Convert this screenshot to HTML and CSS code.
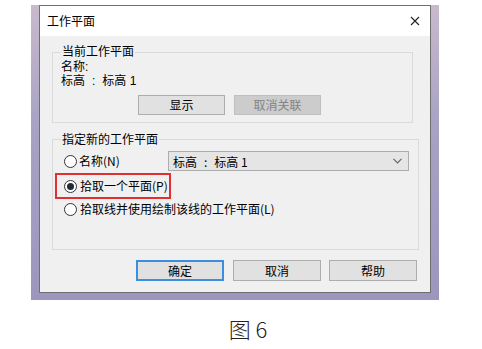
FILE: index.html
```html
<!DOCTYPE html>
<html lang="zh-CN">
<head>
<meta charset="utf-8">
<title>工作平面</title>
<link rel="stylesheet" href="styles.css">
</head>
<body>
<div class="page">
  <div class="frame">
    <div class="dialog">
      <div class="titlebar">
        <span class="title">工作平面</span>
        <svg class="close" width="10" height="10" viewBox="0 0 10 10"><path d="M1 1L9 9M9 1L1 9" stroke="#222" stroke-width="1.1" fill="none"/></svg>
      </div>
      <fieldset class="group group1">
        <legend>当前工作平面</legend>
        <div class="line">名称:</div>
        <div class="line">标高<span class="colon">:</span>标高 1</div>
        <div class="btnrow">
          <button class="btn">显示</button>
          <button class="btn disabled">取消关联</button>
        </div>
      </fieldset>
      <fieldset class="group group2">
        <legend>指定新的工作平面</legend>
        <div class="row row1">
          <span class="radio"></span>
          <span class="rlabel">名称(N)</span>
          <div class="select">
            <span>标高<span class="colon">:</span>标高 1</span>
            <svg width="9" height="6" viewBox="0 0 9 6"><path d="M0.5 0.8L4.5 4.8L8.5 0.8" stroke="#666" stroke-width="1.2" fill="none"/></svg>
          </div>
        </div>
        <div class="row row2">
          <div class="mark">
            <span class="radio checked"></span>
            <span class="rlabel">拾取一个平面(P)</span>
          </div>
        </div>
        <div class="row row3">
          <span class="radio"></span>
          <span class="rlabel">拾取线并使用绘制该线的工作平面(L)</span>
        </div>
      </fieldset>
      <div class="actions">
        <button class="btn wide default">确定</button>
        <button class="btn wide">取消</button>
        <button class="btn wide">帮助</button>
      </div>
    </div>
  </div>
  <div class="caption">图 6</div>
</div>
</body>
</html>
```

FILE: styles.css
```css
* { box-sizing: border-box; }
body {
  margin: 0;
  background: #ffffff;
  font-family: "Noto Sans CJK SC", "Liberation Sans", sans-serif;
  font-size: 12px;
  color: #000;
}
.page { padding-top: 5px; }
.frame {
  margin-left: 31px;
  width: 408px;
  height: 295px;
  padding: 0 8px 7px 8px;
  background: linear-gradient(180deg, #c9b9cc 0%, #a8a3c4 40%, #9c96bc 100%);
}
.dialog {
  height: 288px;
  border: 1px solid #6f6f6f;
  background: #f0f0f0;
}
.titlebar {
  height: 30px;
  background: #ffffff;
  display: flex;
  align-items: center;
  justify-content: space-between;
  padding: 0 10px 0 7px;
}
.title { line-height: 16px; }
.group {
  margin: 8px 0 0 12px;
  border: 1px solid #dadada;
  padding: 0;
  min-width: 0;
}
.group legend {
  margin-left: 8px;
  padding: 0 1px;
  line-height: 16px;
}
.group1 { width: 361px; padding: 0 0 7px 8px; }
.group1 legend {
  margin-left: 0;
  font-family: "Liberation Sans", "Noto Sans CJK SC", sans-serif;
}
.line {
  line-height: 14px;
  font-family: "Liberation Sans", "Noto Sans CJK SC", sans-serif;
}
.colon { padding: 0 7px; }
.btnrow {
  display: flex;
  gap: 9px;
  margin-top: 7px;
  padding-left: 77px;
}
.btn {
  width: 87px;
  height: 20px;
  border: 1px solid #adadad;
  background: #e1e1e1;
  font-family: inherit;
  font-size: 12px;
  color: #000;
  padding: 0;
  line-height: 16px;
}
.btn.disabled {
  background: #cccccc;
  border-color: #bfbfbf;
  color: #838383;
}
.group2 { width: 367px; padding-bottom: 30px; }
.row {
  display: flex;
  align-items: center;
  padding-left: 11px;
}
.row1 { margin-top: 4px; height: 20px; }
.row2 { margin-top: 2px; padding-left: 2px; }
.row3 { height: 20px; }
.radio {
  width: 13px;
  height: 13px;
  border: 1px solid #333;
  border-radius: 50%;
  background: #fff;
  display: inline-flex;
  align-items: center;
  justify-content: center;
  flex: none;
}
.radio.checked::after {
  content: "";
  width: 7px;
  height: 7px;
  border-radius: 50%;
  background: #1f2a3a;
}
.rlabel { margin-left: 3px; line-height: 16px; }
.row1 .rlabel { margin-left: 2px; }
.select {
  margin-left: auto;
  margin-right: 9px;
  width: 241px;
  height: 20px;
  border: 1px solid #acacac;
  background: #e5e5e5;
  display: flex;
  align-items: center;
  justify-content: space-between;
  padding: 0 6px 0 4px;
}
.mark {
  display: flex;
  align-items: center;
  height: 26px;
  border: 2px solid #e0302f;
  padding: 0 1px 0 7px;
}
.actions {
  display: flex;
  margin-top: 10px;
  padding-left: 96px;
}
.btn.wide { width: 88px; height: 21px; }
.actions .btn + .btn { margin-left: 9px; }
.actions .btn:last-child { margin-left: 8px; }
.btn.default { border: 2px solid #3c8fdc; }
.caption {
  margin-top: 15px;
  padding-left: 14px;
  text-align: center;
  font-size: 22px;
  line-height: 26px;
  font-weight: 300;
  color: #222;
}
```
